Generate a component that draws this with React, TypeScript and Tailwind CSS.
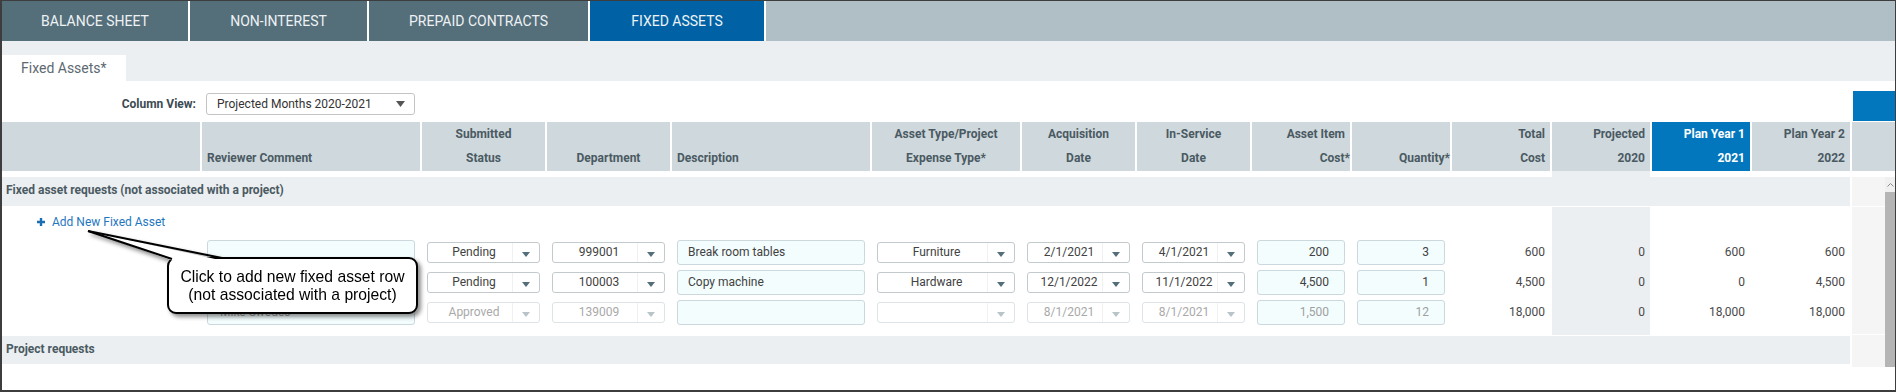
import React from 'react';

// column widths of the fixed asset grid (last column sits outside, next to the scrollbar)
const GRID =
  'grid grid-cols-[198px_218px_123px_123px_198px_148px_113px_113px_98px_98px_98px_98px_98px_98px] gap-x-[2px]';

type Align = 'left' | 'center' | 'right';

type Header = { top?: string; bottom: string; align: Align; active?: boolean };

const headers: Header[] = [
  { bottom: '', align: 'left' },
  { bottom: 'Reviewer Comment', align: 'left' },
  { top: 'Submitted', bottom: 'Status', align: 'center' },
  { bottom: 'Department', align: 'center' },
  { bottom: 'Description', align: 'left' },
  { top: 'Asset Type/Project', bottom: 'Expense Type*', align: 'center' },
  { top: 'Acquisition', bottom: 'Date', align: 'center' },
  { top: 'In-Service', bottom: 'Date', align: 'center' },
  { top: 'Asset Item', bottom: 'Cost*', align: 'right' },
  { bottom: 'Quantity*', align: 'right' },
  { top: 'Total', bottom: 'Cost', align: 'right' },
  { top: 'Projected', bottom: '2020', align: 'right' },
  { top: 'Plan Year 1', bottom: '2021', align: 'right', active: true },
  { top: 'Plan Year 2', bottom: '2022', align: 'right' },
];

type Row = {
  comment: string;
  status: string;
  dept: string;
  desc: string;
  type: string;
  acq: string;
  inService: string;
  cost: string;
  qty: string;
  total: string;
  proj: string;
  py1: string;
  py2: string;
  disabled?: boolean;
};

const rows: Row[] = [
  {
    comment: '',
    status: 'Pending',
    dept: '999001',
    desc: 'Break room tables',
    type: 'Furniture',
    acq: '2/1/2021',
    inService: '4/1/2021',
    cost: '200',
    qty: '3',
    total: '600',
    proj: '0',
    py1: '600',
    py2: '600',
  },
  {
    comment: '',
    status: 'Pending',
    dept: '100003',
    desc: 'Copy machine',
    type: 'Hardware',
    acq: '12/1/2022',
    inService: '11/1/2022',
    cost: '4,500',
    qty: '1',
    total: '4,500',
    proj: '0',
    py1: '0',
    py2: '4,500',
  },
  {
    comment: 'Mike Swedes',
    status: 'Approved',
    dept: '139009',
    desc: '',
    type: '',
    acq: '8/1/2021',
    inService: '8/1/2021',
    cost: '1,500',
    qty: '12',
    total: '18,000',
    proj: '0',
    py1: '18,000',
    py2: '18,000',
    disabled: true,
  },
];

const tabs = [
  { label: 'BALANCE SHEET', w: 'w-[186px]' },
  { label: 'NON-INTEREST', w: 'w-[177px]' },
  { label: 'PREPAID CONTRACTS', w: 'w-[219px]' },
  { label: 'FIXED ASSETS', w: 'w-[174px]', active: true },
];

const Caret = ({ color }: { color: string }) => (
  <svg width="8" height="5" viewBox="0 0 8 5">
    <path d="M0 0H8L4 5Z" fill={color} />
  </svg>
);

// right aligned labels let the asterisk hang into the padding
const Label = ({ text, align }: { text?: string; align: Align }) => {
  if (!text) return null;
  if (align === 'right' && text.endsWith('*')) {
    return (
      <>
        {text.slice(0, -1)}
        <span className="-mr-[5px]">*</span>
      </>
    );
  }
  return <>{text}</>;
};

const HeaderCell = ({ h }: { h: Header }) => {
  const alignCls =
    h.align === 'left'
      ? 'text-left pl-[5px]'
      : h.align === 'center'
        ? 'text-center'
        : 'text-right pr-[5px]';
  return (
    <div
      className={`${h.active ? 'bg-[#0277bd] text-white' : 'bg-[#cfd8dc] text-[#4a5a63]'} ${alignCls} flex flex-col text-[12px] font-bold leading-[24px]`}
    >
      <div className="h-[24px] whitespace-nowrap">
        <Label text={h.top} align={h.align} />
      </div>
      <div className="h-[24px] whitespace-nowrap">
        <Label text={h.bottom} align={h.align} />
      </div>
    </div>
  );
};

const Select = ({ value, disabled }: { value: string; disabled?: boolean }) => (
  <div
    className={`flex h-[21px] w-full rounded-[3px] border bg-white ${disabled ? 'border-[#dde3e6] text-[#a9a9a9]' : 'border-[#c3cacd] text-[#424242]'}`}
  >
    <div className="flex flex-1 items-center justify-center whitespace-nowrap pl-[8px] text-[12px]">
      {value}
    </div>
    <div className="flex w-[27px] items-center justify-center border-l border-[#f1f1f1] pt-[5px]">
      <Caret color={disabled ? '#b9c4c9' : '#546e7a'} />
    </div>
  </div>
);

const TextBox = ({
  value,
  align = 'left',
  disabled,
  pad = 'pl-[10px]',
}: {
  value: string;
  align?: 'left' | 'right';
  disabled?: boolean;
  pad?: string;
}) => (
  <div
    className={`flex h-[25px] w-full items-center whitespace-nowrap rounded-[3px] border border-[#cbd8dd] bg-[#f3fdfe] text-[12px] ${align === 'right' ? 'justify-end pr-[15px]' : pad} ${disabled ? 'text-[#a0a0a0]' : 'text-[#424242]'}`}
  >
    {value}
  </div>
);

const Cell = ({ children }: { children?: React.ReactNode }) => (
  <div className="flex h-full items-center px-[5px]">{children}</div>
);

const Num = ({ children, gray }: { children: React.ReactNode; gray?: boolean }) => (
  <div
    className={`flex h-full items-center justify-end pr-[5px] text-[12px] text-[#4a4a4a] ${gray ? 'bg-[#eceff1]' : ''}`}
  >
    {children}
  </div>
);

// a row that only shows the shaded "Projected" column
const ShadeRow = ({ h }: { h: string }) => (
  <div className={`${GRID} ${h}`}>
    {Array.from({ length: 14 }).map((_, i) => (
      <div key={i} className={i === 11 ? 'bg-[#eceff1]' : ''} />
    ))}
  </div>
);

const Callout = () => (
  <div className="pointer-events-none absolute left-[80px] top-[225px] h-[96px] w-[345px] drop-shadow-[3px_3px_2px_rgba(0,0,0,0.45)]">
    <div className="absolute left-[85px] top-[31px] flex h-[57px] w-[251px] items-center justify-center rounded-[9px] border-2 border-black bg-white text-center font-['Liberation_Sans',Arial,sans-serif] text-[15.7px] leading-[18px] text-black">
      Click to add new fixed asset row
      <br />
      (not associated with a project)
    </div>
    <svg className="absolute left-0 top-0" width="150" height="40" viewBox="0 0 150 40">
      <polygon points="6,5 90,34.5 140,34.5" fill="#fff" />
      <line x1="6" y1="5" x2="90" y2="33" stroke="#000" strokeWidth="2" />
      <line x1="6" y1="5" x2="140" y2="32" stroke="#000" strokeWidth="2" />
    </svg>
  </div>
);

export default function App() {
  return (
    <div className="relative h-[392px] w-[1896px] overflow-hidden border-b-2 border-l-2 border-r border-t border-[#3d3d3d] bg-white font-['Roboto',sans-serif]">
      {/* top tabs */}
      <div className="flex h-[40px] gap-[2px] bg-white">
        {tabs.map((t) => (
          <div
            key={t.label}
            className={`${t.w} ${t.active ? 'bg-[#0062a5]' : 'bg-[#546e7a]'} flex items-center justify-center text-[14px] text-[#eef2f4]`}
          >
            {t.label}
          </div>
        ))}
        <div className="flex-1 bg-[#b0bec5]" />
      </div>

      {/* sub tabs */}
      <div className="flex h-[40px] items-end bg-[#eceff1]">
        <div className="h-[26px] w-[124px] bg-white pl-[19px] text-[14px] leading-[26px] text-[#5d6970]">
          Fixed Assets*
        </div>
      </div>

      {/* column view */}
      <div className="flex h-[41px] items-start">
        <div className="mt-[12px] flex h-[22px] w-[194px] items-center justify-end text-[12px] font-bold text-[#3c4a52]">
          Column View:
        </div>
        <div className="ml-[10px] mt-[12px] flex h-[22px] w-[209px] items-center justify-between rounded-[3px] border border-[#c4c4c4] pl-[10px] pr-[9px] text-[12px] text-[#333]">
          <span>Projected Months 2020-2021</span>
          <svg width="9" height="6" viewBox="0 0 9 6">
            <path d="M0 0H9L4.5 6Z" fill="#555" />
          </svg>
        </div>
        <div className="ml-auto mt-[10px] h-[30px] w-[42px] bg-[#0277bd]" />
      </div>

      {/* table */}
      <div className="flex gap-[2px]">
        <div className="flex w-[1848px] flex-col">
          <div className={`${GRID} h-[49px]`}>
            {headers.map((h, i) => (
              <HeaderCell key={i} h={h} />
            ))}
          </div>
          <ShadeRow h="h-[6px]" />
          <div className="flex h-[29px] items-center bg-[#eceff1] pb-[3px] pl-[4px] text-[12px] font-bold text-[#4a5a63]">
            Fixed asset requests (not associated with a project)
          </div>
          <div className="h-[1px]" />
          <div className={`${GRID} h-[30px]`}>
            <div className="flex items-center gap-[7px] pl-[35px] text-[12px] text-[#1f77bf]">
              <svg width="8" height="8" viewBox="0 0 8 8">
                <path d="M4 0V8M0 4H8" stroke="#1a6fb3" strokeWidth="2.4" />
              </svg>
              Add New Fixed Asset
            </div>
            {Array.from({ length: 13 }).map((_, i) => (
              <div key={i} className={i === 10 ? 'bg-[#eceff1]' : ''} />
            ))}
          </div>
          {rows.map((r, i) => (
            <div key={i} className={`${GRID} h-[30px]`}>
              <div />
              <Cell>
                <TextBox value={r.comment} disabled={r.disabled} pad="pl-[12px]" />
              </Cell>
              <Cell>
                <Select value={r.status} disabled={r.disabled} />
              </Cell>
              <Cell>
                <Select value={r.dept} disabled={r.disabled} />
              </Cell>
              <Cell>
                <TextBox value={r.desc} disabled={r.disabled} />
              </Cell>
              <Cell>
                <Select value={r.type} disabled={r.disabled} />
              </Cell>
              <Cell>
                <Select value={r.acq} disabled={r.disabled} />
              </Cell>
              <Cell>
                <Select value={r.inService} disabled={r.disabled} />
              </Cell>
              <Cell>
                <TextBox value={r.cost} align="right" disabled={r.disabled} />
              </Cell>
              <Cell>
                <TextBox value={r.qty} align="right" disabled={r.disabled} />
              </Cell>
              <Num>{r.total}</Num>
              <Num gray>{r.proj}</Num>
              <Num>{r.py1}</Num>
              <Num>{r.py2}</Num>
            </div>
          ))}
          <ShadeRow h="h-[8px]" />
          <div className="h-[1px]" />
          <div className="flex h-[28px] items-center bg-[#eceff1] pl-[4px] pb-[3px] text-[12px] font-bold text-[#4a5a63]">
            Project requests
          </div>
        </div>

        {/* trailing column + scrollbar */}
        <div className="flex flex-1 flex-col">
          <div className="h-[49px] bg-[#cfd8dc]" />
          <div className="h-[6px]" />
          <div className="flex h-[190px]">
            <div className="flex flex-1 flex-col bg-[#f5f5f5]">
              <div className="h-[29px]" />
              <div className="h-[1px] bg-white" />
              <div className="h-[127px]" />
              <div className="h-[1px] bg-white" />
            </div>
            <div className="flex w-[10px] flex-col bg-[#f0f0f0]">
              <div className="flex h-[15px] items-center justify-center">
                <svg width="7" height="4" viewBox="0 0 7 4">
                  <path d="M0.5 3.5L3.5 0.5L6.5 3.5" fill="none" stroke="#8a8a8a" strokeWidth="1" />
                </svg>
              </div>
              <div className="h-[175px] bg-[#b5b5b5]" />
            </div>
          </div>
        </div>
      </div>

      <Callout />
    </div>
  );
}
